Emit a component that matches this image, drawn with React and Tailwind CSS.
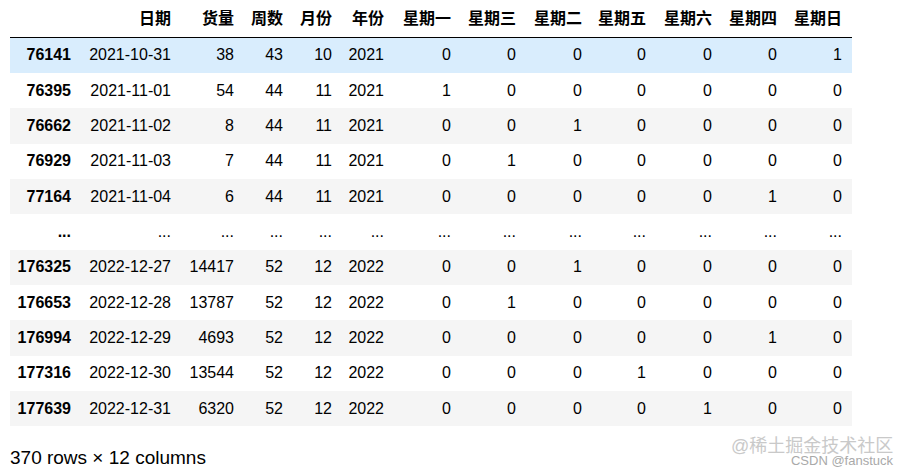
const columns = [
  { name: '', w: 'w-[71px]' },
  { name: '日期', w: 'w-[100px]' },
  { name: '货量', w: 'w-[63px]' },
  { name: '周数', w: 'w-[49px]' },
  { name: '月份', w: 'w-[49px]' },
  { name: '年份', w: 'w-[52px]' },
  { name: '星期一', w: 'w-[67px]' },
  { name: '星期三', w: 'w-[65px]' },
  { name: '星期二', w: 'w-[66px]' },
  { name: '星期五', w: 'w-[64px]' },
  { name: '星期六', w: 'w-[66px]' },
  { name: '星期四', w: 'w-[65px]' },
  { name: '星期日', w: 'w-[65px]' },
]

const rows = [
  ['76141', '2021-10-31', 38, 43, 10, 2021, 0, 0, 0, 0, 0, 0, 1],
  ['76395', '2021-11-01', 54, 44, 11, 2021, 1, 0, 0, 0, 0, 0, 0],
  ['76662', '2021-11-02', 8, 44, 11, 2021, 0, 0, 1, 0, 0, 0, 0],
  ['76929', '2021-11-03', 7, 44, 11, 2021, 0, 1, 0, 0, 0, 0, 0],
  ['77164', '2021-11-04', 6, 44, 11, 2021, 0, 0, 0, 0, 0, 1, 0],
  ['...', '...', '...', '...', '...', '...', '...', '...', '...', '...', '...', '...', '...'],
  ['176325', '2022-12-27', 14417, 52, 12, 2022, 0, 0, 1, 0, 0, 0, 0],
  ['176653', '2022-12-28', 13787, 52, 12, 2022, 0, 1, 0, 0, 0, 0, 0],
  ['176994', '2022-12-29', 4693, 52, 12, 2022, 0, 0, 0, 0, 0, 1, 0],
  ['177316', '2022-12-30', 13544, 52, 12, 2022, 0, 0, 0, 1, 0, 0, 0],
  ['177639', '2022-12-31', 6320, 52, 12, 2022, 0, 0, 0, 0, 1, 0, 0],
]

export default function App() {
  return (
    <div className="relative w-[909px] h-[475px] bg-white text-black overflow-hidden font-['Liberation_Sans','Noto_Sans_CJK_SC',sans-serif]">
      <div className="pl-[10px]">
        <table className="table-fixed w-[842px] border-collapse text-[16px]">
          <thead>
            <tr className="border-b border-black">
              {columns.map((c, i) => (
                <th key={i} className={`${c.w} h-[37.5px] p-0 pr-[10px] text-right font-bold align-middle leading-[18px]`}>
                  {c.name}
                </th>
              ))}
            </tr>
          </thead>
          <tbody>
            {rows.map((r, ri) => (
              <tr
                key={ri}
                className={ri === 0 ? 'bg-[#d9edfd]' : ri % 2 === 0 ? 'bg-[#f5f5f5]' : 'bg-white'}
              >
                {r.map((v, ci) => (
                  ci === 0 ? (
                    <th key={ci} className="h-[35.36px] p-0 pr-[10px] text-right font-bold align-middle leading-[18px]">{v}</th>
                  ) : (
                    <td key={ci} className="h-[35.36px] p-0 pr-[10px] text-right align-middle leading-[18px]">{v}</td>
                  )
                ))}
              </tr>
            ))}
          </tbody>
        </table>
        <p className="mt-[21px] text-[19px] leading-[22px]">370 rows × 12 columns</p>
      </div>

      {/* watermark */}
      <div className="absolute left-[731px] top-[437px] text-[18px] leading-none text-[#c9c9c9] whitespace-nowrap">
        @稀土掘金技术社区
      </div>
      <div className="absolute right-[16px] top-[454px] text-[13px] leading-none text-[#a9a9a9] whitespace-nowrap">
        CSDN @fanstuck
      </div>
    </div>
  )
}
